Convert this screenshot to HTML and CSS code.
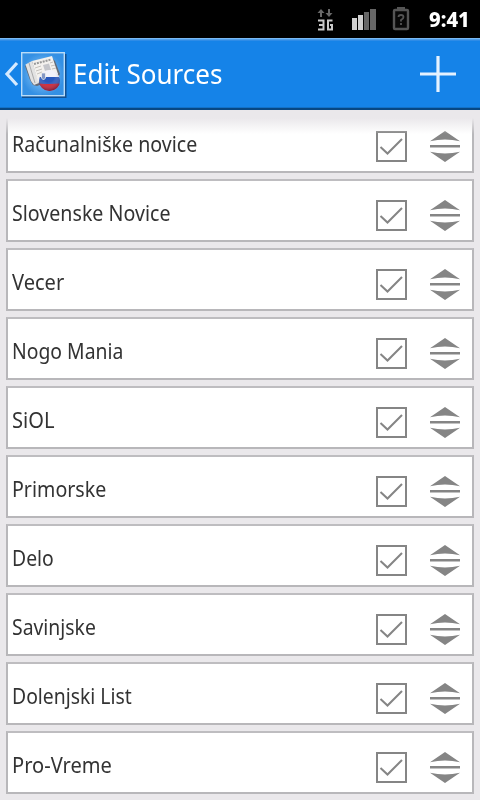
FILE: index.html
```html
<!DOCTYPE html>
<html lang="en">
<head>
<meta charset="utf-8">
<title>Edit Sources</title>
<link rel="stylesheet" href="styles.css">
</head>
<body>
<svg class="defs" width="0" height="0" aria-hidden="true">
  <symbol id="check" viewBox="0 0 31 31"><rect x="1" y="1" width="29" height="29" fill="#fff" stroke="#858585" stroke-width="2"/><path d="M4.500 16 11.500 22.500 26 8" fill="none" stroke="#858585" stroke-width="2"/></symbol>
  <symbol id="sort" viewBox="0 0 30 31"><path d="M0 10.200 15 0 30 10.200Q15 6.800 0 10.200ZM0 20.800Q15 24.200 30 20.800L15 31ZM0 14h30v2.600H0Z" fill="#858585"/></symbol>
</svg>
<div class="screen">
  <div class="status">
    <svg class="status-icons" width="114" height="38" viewBox="300 0 114 38">
      <path d="M321 17v-5M329 9v5" stroke="#686868" stroke-width="2"/><path d="M317.500 13 321 9l3.500 4ZM325.500 13h7L329 17Z" fill="#686868"/>
      <path d="M318 20.500h5.500v9H318M319 25h4.500M332.500 20.500H328v9h4v-4.500h-2" fill="none" stroke="#c9c9c9" stroke-width="2"/>
      <path d="M352 18h5v12h-5ZM358 15h5v15h-5Z" fill="#d0d0d0"/><path d="M364 12h5v18h-5ZM370 9h6v21h-6Z" fill="#666"/>
      <rect x="394" y="10" width="14" height="19" rx="1" fill="#080808" stroke="#555" stroke-width="2.400"/><path d="M397 7h8v3h-8Z" fill="#555"/>
      <path d="M398.500 17q0-2 2.500-2t2.500 2q0 1.500-2.500 3v1.500M401 23v2" fill="none" stroke="#555" stroke-width="1.800"/>
    </svg>
    <span class="clock">9:41</span>
  </div>
  <header class="bar">
    <svg class="back" width="16" height="26" viewBox="0 0 16 26"><path d="M13 2 3 13 13 24" fill="none" stroke="#d5eaff" stroke-width="3.200"/></svg>
    <svg class="logo" width="46" height="47" viewBox="0 0 46 47">
      <defs>
        <radialGradient id="lg"><stop offset="0" stop-color="#9bd0f7"/><stop offset="1" stop-color="#3490e4"/></radialGradient>
        <radialGradient id="shade" cx=".45" cy=".3" r=".7"><stop offset=".4" stop-color="#fff" stop-opacity="0"/><stop offset="1" stop-color="#202050" stop-opacity=".5"/></radialGradient>
        <clipPath id="ball"><circle cx="28.500" cy="28.500" r="10.500"/></clipPath>
      </defs>
      <path d="M1 45h43.500V2" fill="none" stroke="#12447b" stroke-width="2" opacity=".8"/>
      <rect x=".7" y=".7" width="42.600" height="43" fill="url(#lg)" stroke="#b9dcf8" stroke-width="1.400"/>
      <path d="M4 14 10 10 30 5 34 9 39 22 36 27 16 34 12 33 9 28Z" fill="#656a75"/>
      <path d="M4.500 12.500 11 9 18 31 13 33 10 29Z" fill="#e2e2e2"/><path d="M8 11l6 20" stroke="#aaa" stroke-width="1"/>
      <path d="M11 9 31 4 37 22 17 30Z" fill="#f3f1ee"/>
      <path d="M13 12 30 7.500" stroke="#999" stroke-width="2" stroke-dasharray="2 1"/>
      <path d="M14 16 20 14M15 19 21 17M16 22 21 20M29 11 32 10M30 14 34 13M31 17 35 16" stroke="#c4c1bc" stroke-width="1"/>
      <path d="M22 13 28 11.500 30 18 24 19Z" fill="#c4c5ca"/>
      <g clip-path="url(#ball)"><path d="M18 18h22v8H18Z" fill="#f2f2fa"/><path d="M18 25h22v8H18Z" fill="#2858bd"/><path d="M18 31.500q10 1 22 0V40H18Z" fill="#d51928"/><circle cx="28.500" cy="28.500" r="10.500" fill="url(#shade)"/></g>
      <path d="M20.500 21h4v5l-2 2-2-2Z" fill="#8397c5" stroke="#eee" stroke-width=".8"/>
    </svg>
    <h1 class="title">Edit Sources</h1>
    <svg class="add" width="36" height="36" viewBox="0 0 36 36"><path d="M18 0v36M0 18h36" stroke="#e5f2ff" stroke-width="3.200"/></svg>
  </header>
  <main class="list">
    <div class="row"><span class="name">Računalniške novice</span><svg class="check"><use href="#check"/></svg><svg class="sort"><use href="#sort"/></svg></div>
    <div class="row"><span class="name">Slovenske Novice</span><svg class="check"><use href="#check"/></svg><svg class="sort"><use href="#sort"/></svg></div>
    <div class="row"><span class="name wide">Vecer</span><svg class="check"><use href="#check"/></svg><svg class="sort"><use href="#sort"/></svg></div>
    <div class="row"><span class="name narrow">Nogo Mania</span><svg class="check"><use href="#check"/></svg><svg class="sort"><use href="#sort"/></svg></div>
    <div class="row"><span class="name wide">SiOL</span><svg class="check"><use href="#check"/></svg><svg class="sort"><use href="#sort"/></svg></div>
    <div class="row"><span class="name">Primorske</span><svg class="check"><use href="#check"/></svg><svg class="sort"><use href="#sort"/></svg></div>
    <div class="row"><span class="name narrow">Delo</span><svg class="check"><use href="#check"/></svg><svg class="sort"><use href="#sort"/></svg></div>
    <div class="row"><span class="name narrow">Savinjske</span><svg class="check"><use href="#check"/></svg><svg class="sort"><use href="#sort"/></svg></div>
    <div class="row"><span class="name narrow">Dolenjski List</span><svg class="check"><use href="#check"/></svg><svg class="sort"><use href="#sort"/></svg></div>
    <div class="row"><span class="name wide">Pro-Vreme</span><svg class="check"><use href="#check"/></svg><svg class="sort"><use href="#sort"/></svg></div>
  </main>
</div>
</body>
</html>
```
FILE: styles.css
```css
* { box-sizing: border-box; }
body { margin: 0; font-family: "Noto Sans", "Open Sans", sans-serif; }
svg { display: block; flex: none; }
.defs { position: absolute; }
.screen { width: 480px; height: 800px; overflow: hidden; background: #eae8eb; }
.status { height: 38px; background: #000; display: flex; justify-content: flex-end; }
.status-icons { margin-right: 15px; filter: blur(.35px); }
.clock { width: 51px; color: #fff; font-size: 21px; line-height: 39px; font-weight: 800; white-space: nowrap; transform: scaleX(.96); transform-origin: left; }
.bar { height: 72px; display: flex; align-items: flex-start; background: linear-gradient(#79b9f4 0 1px, #4e9eea 1px 2px, #2e8ce7 2px 3px, #1583e8 3px 69px, #1271c8 69px 70px, #074783 70px); }
.back { margin: 23px 0 0 4px; }
.logo { margin: 14px 0 0 1px; }
.title { margin: 0 0 0 6px; flex: 1; color: #fff; font-size: 28px; line-height: 71px; font-weight: 400; white-space: nowrap; transform: scaleX(.93); transform-origin: left; }
.add { margin: 18px 24px 0 0; }
.list { position: relative; display: flex; flex-direction: column; gap: 6px; padding: 0 6px; }
.list::before { content: ""; position: absolute; inset: 0 0 auto; height: 24px; background: linear-gradient(#eae8eb 0 8px, rgba(234, 232, 235, 0)); }
.row { height: 63px; flex: none; display: flex; align-items: flex-start; padding: 19px 12px 0 4px; background: #fff; border: 2px solid #b8b7ba; border-top-color: #bebdc0; }
.name { flex: 1; margin-top: -2px; color: #333; font-size: 22px; line-height: 28px; white-space: nowrap; transform: scaleX(.892); transform-origin: left; }
.name.narrow { transform: scaleX(.88); }
.name.wide { transform: scaleX(.913); }
.check { width: 31px; height: 31px; margin-right: 23px; }
.sort { width: 30px; height: 31px; }
```
